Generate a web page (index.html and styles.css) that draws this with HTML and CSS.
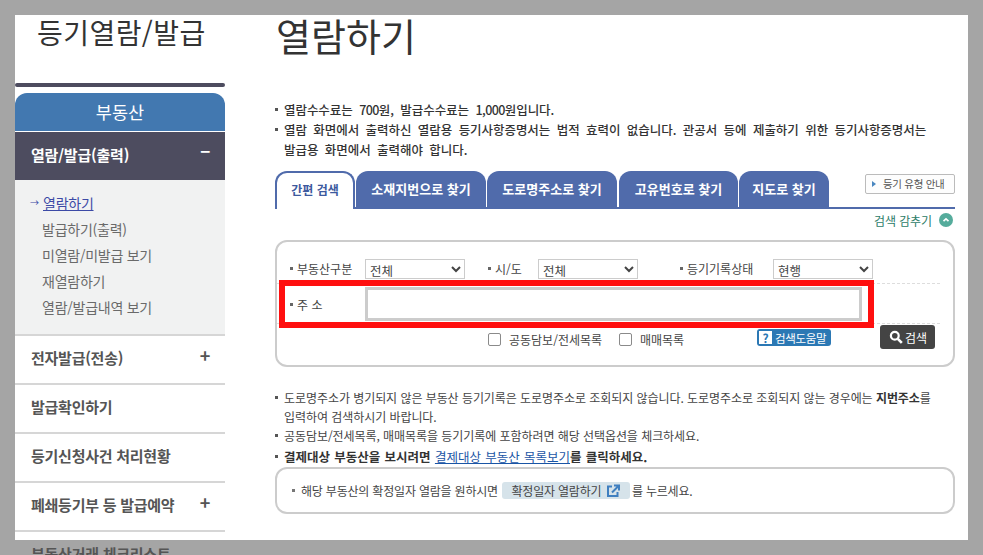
FILE: index.html
```html
<!DOCTYPE html>
<html lang="ko">
<head>
<meta charset="utf-8">
<title>열람하기</title>
<link rel="stylesheet" href="styles.css">
</head>
<body>
<div class="panel">
  <aside class="side">
    <h2 class="side-title">등기열람/발급</h2>
    <div class="side-bar"></div>
    <div class="side-tab">부동산</div>
    <div class="menu-open"><span>열람/발급(출력)</span><span class="sign">−</span></div>
    <ul class="sub">
      <li class="cur"><span class="arrow">→</span><a href="#">열람하기</a></li>
      <li>발급하기(출력)</li>
      <li>미열람/미발급 보기</li>
      <li>재열람하기</li>
      <li>열람/발급내역 보기</li>
    </ul>
    <div class="menu"><span>전자발급(전송)</span><span class="sign">+</span></div>
    <div class="menu"><span>발급확인하기</span></div>
    <div class="menu"><span>등기신청사건 처리현황</span></div>
    <div class="menu"><span>폐쇄등기부 등 발급예약</span><span class="sign">+</span></div>
    <div class="menu"><span>부동산거래 체크리스트</span></div>
  </aside>
  <main class="main">
    <h1 class="title">열람하기</h1>
    <ul class="notes top">
      <li>열람수수료는 <span class="num">700</span>원, 발급수수료는 <span class="num">1,000</span>원입니다.</li>
      <li>열람 화면에서 출력하신 열람용 등기사항증명서는 법적 효력이 없습니다. 관공서 등에 제출하기 위한 등기사항증명서는<br>발급용 화면에서 출력해야 합니다.</li>
    </ul>
    <div class="tabs">
      <div class="tab active">간편 검색</div>
      <div class="tab t130">소재지번으로 찾기</div>
      <div class="tab t130">도로명주소로 찾기</div>
      <div class="tab t119">고유번호로 찾기</div>
      <div class="tab t90">지도로 찾기</div>
      <a class="guide" href="#"><i></i>등기 유형 안내</a>
    </div>
    <div class="hide-row">검색 감추기
      <svg class="up" width="14" height="14" viewBox="0 0 14 14"><circle cx="7" cy="7" r="7" fill="#55ac9c"/><path d="M4.5 8.2 7 5.8l2.5 2.4" fill="none" stroke="#fff" stroke-width="1.6"/></svg>
    </div>
    <form class="search">
      <div class="row-sel">
        <label class="lab l1">부동산구분</label><select class="sel"><option>전체</option></select>
        <label class="lab l2">시/도</label><select class="sel"><option>전체</option></select>
        <label class="lab l3">등기기록상태</label><select class="sel"><option>현행</option></select>
      </div>
      <div class="row-addr">
        <label class="lab l1">주 소</label><input class="addr" type="text">
      </div>
      <div class="row-opt">
        <label class="chk c1"><input type="checkbox">공동담보/전세목록</label>
        <label class="chk c2"><input type="checkbox">매매목록</label>
        <a class="help" href="#"><b>?</b>검색도움말</a>
        <button class="go" type="button">
          <svg width="14" height="14" viewBox="0 0 14 14"><circle cx="5.8" cy="5.8" r="3.9" fill="none" stroke="#fff" stroke-width="2.2"/><path d="m8.8 8.8 4 4" stroke="#fff" stroke-width="2.6"/></svg>검색
        </button>
      </div>
      <div class="red"></div>
    </form>
    <ul class="notes bottom">
      <li>도로명주소가 병기되지 않은 부동산 등기기록은 도로명주소로 조회되지 않습니다. 도로명주소로 조회되지 않는 경우에는 <b>지번주소</b>를<br>입력하여 검색하시기 바랍니다.</li>
      <li>공동담보/전세목록, 매매목록을 등기기록에 포함하려면 해당 선택옵션을 체크하세요.</li>
      <li class="strong">결제대상 부동산을 보시려면 <a href="#">결제대상 부동산 목록보기</a>를 클릭하세요.</li>
    </ul>
    <div class="info">
      <span class="dot">해당 부동산의 확정일자 열람을 원하시면</span>
      <a class="date" href="#">확정일자 열람하기
        <svg width="14" height="14" viewBox="0 0 14 14"><path d="M6 2.5H2v9.5h9.5V8" fill="none" stroke="#3f7fc0" stroke-width="2"/><path d="M6 8.5 12 2.5M8 1.5h5v5" fill="none" stroke="#3f7fc0" stroke-width="2"/></svg>
      </a>
      <span>를 누르세요.</span>
    </div>
  </main>
</div>
</body>
</html>
```
FILE: styles.css
```css
* { box-sizing: border-box; }
html, body { margin: 0; padding: 0; height: 555px; overflow: hidden; }
body { background: #a5a5a5; font-family: "Noto Sans CJK KR", "Noto Sans", sans-serif; color: #444; font-size: 13px; }
ul { list-style: none; margin: 0; padding: 0; }
a { color: inherit; }
.panel { margin: 15px 15px 0; width: 953px; height: 525px; background: #fff; display: flex; }

.side { width: 210px; flex: none; }
.side-title { margin: 0; height: 68px; padding: 0 0 0 22px; font-size: 28px; font-weight: 400; line-height: 34px; color: #333; letter-spacing: 0.45px; }
.side-bar { height: 4px; background: #4d4c5f; border-radius: 2px; }
.side-tab { margin-top: 6px; height: 38px; background: #4278b0; color: #fff; border-radius: 12px 12px 0 0; text-align: center; font-size: 17.5px; line-height: 38px; }
.menu-open { margin-top: 1px; height: 48px; background: #4d4c5f; color: #fff; font-size: 15px; font-weight: 700; padding: 0 15px 0 16px; display: flex; justify-content: space-between; line-height: 46px; letter-spacing: -.2px; }
.menu-open .sign { font-size: 17px; line-height: 38px; }
.sub { height: 154px; background: #f1f2f2; padding: 10px 0 0 27px; font-size: 14px; line-height: 26px; color: #6a6a6a; letter-spacing: -.25px; }
.sub li { height: 26px; }
.sub li.cur { margin-left: -12px; color: #3c4aa6; }
.sub .arrow { display: inline-block; width: 13px; font-size: 9px; vertical-align: top; }
.menu { height: 49px; border-top: 2px solid #d6d6d6; padding: 0 15px 0 16px; font-size: 15px; font-weight: 700; color: #555; display: flex; justify-content: space-between; line-height: 44px; letter-spacing: -.25px; }
.menu .sign { font-size: 18px; line-height: 38px; }

.main { flex: none; width: 680px; margin-left: 50px; }
.title { margin: 0; height: 85px; padding-left: 1px; font-size: 38px; font-weight: 400; line-height: 39px; color: #333; }
.notes li { position: relative; padding-left: 9px; line-height: 20px; }
.notes li::before { content: ""; position: absolute; left: 0; top: 8px; width: 3px; height: 3px; background: #555; }
.notes.top { height: 71px; font-weight: 500; font-size: 12.5px; letter-spacing: -.05px; word-spacing: 3px; color: #333; }
.num { letter-spacing: -.6px; }

.tabs { display: flex; gap: 1px; height: 38px; border-bottom: 2px solid #506bab; position: relative; }
.tab { width: 130px; height: 36px; background: #506bab; color: #fff; font-weight: 700; font-size: 13px; border-radius: 12px 12px 0 0; text-align: center; line-height: 36px; }
.tab.t119 { width: 119px; margin-left: 1px; }
.tab.t90 { width: 90px; }
.tab.active { width: 80px; height: 38px; background: #fff; color: #3d5a9e; border: 2px solid #506bab; border-bottom: 0; line-height: 34px; font-size: 12px; }
.guide { position: absolute; right: 0; top: 3px; width: 90px; height: 20px; border: 1px solid #bbb; border-radius: 2px; font-size: 10.5px; color: #555; line-height: 18px; text-decoration: none; padding-left: 17px; letter-spacing: -.3px; background: #fdfdfd; }
.guide i { position: absolute; left: 6px; top: 6px; border-left: 4px solid #4a87c0; border-top: 3px solid transparent; border-bottom: 3px solid transparent; }
.hide-row { height: 31px; padding: 0 2px 9px 0; display: flex; justify-content: flex-end; align-items: center; gap: 7px; font-size: 12px; letter-spacing: -.1px; color: #2c7c68; }

.search { position: relative; height: 127px; border: 2px solid #ccc; border-radius: 12px; }
.row-sel { height: 41px; padding-top: 17px; display: flex; align-items: flex-start; }
.lab { font-size: 12px; color: #444; position: relative; line-height: 20px; padding-left: 7px; }
.lab::before { content: ""; position: absolute; left: 0; top: 8px; width: 3px; height: 3px; background: #666; }
.lab.l1 { margin-left: 13px; width: 75px; }
.lab.l2 { margin-left: 23px; width: 50px; }
.lab.l3 { margin-left: 42px; width: 93px; }
.sel { width: 100px; height: 20px; border: 1px solid #ccc; background: #fff; font: 12.5px "Noto Sans CJK KR", sans-serif; color: #444; padding: 0; border-radius: 0; }
.row-addr { height: 41px; margin-right: 13px; display: flex; align-items: center; border-top: 1px dashed #ddd; border-bottom: 1px dashed #ddd; }
.row-addr .lab { top: 1px; }
.addr { width: 497px; height: 34px; border: 3px solid #ccc; background: #fff; }
.row-opt { display: flex; align-items: flex-start; position: relative; font-size: 12px; padding-top: 5px; }
.chk { display: flex; align-items: center; height: 16px; margin-top: 2px; }
.chk input { appearance: none; margin: 0 8px 0 0; width: 13px; height: 13px; border: 1.5px solid #8a8a8a; border-radius: 2px; background: #fff; }
.c1 { margin-left: 211px; width: 131px; }
.c2 { width: 138px; }
.help { width: 74px; height: 17px; background: #2b78b4; border-radius: 3px; color: #fff; text-decoration: none; display: flex; align-items: center; gap: 3px; font-size: 11.5px; padding-left: 2px; letter-spacing: -.3px; }
.help b { width: 13px; height: 13px; background: #fff; color: #2b78b4; text-align: center; line-height: 13px; font-size: 12px; }
.go { margin-left: 49px; margin-top: -4px; width: 55px; height: 24px; background: #444; color: #fff; border: 0; border-radius: 3px; font: 12px "Noto Sans CJK KR", sans-serif; display: flex; align-items: center; gap: 2px; padding: 0 0 0 9px; }
.red { position: absolute; left: 2px; top: 38px; width: 595px; height: 48px; border: 6px solid #ff0f0f; }

.notes.bottom { margin-top: 20px; height: 80px; font-size: 12px; letter-spacing: -.06px; }
.notes.bottom b { color: #333; }
.notes.bottom li:first-child { top: 1px; line-height: 19px; }
.notes.bottom li:nth-child(2) { top: 1px; }
.notes.bottom li.strong { margin-top: 2px; font-weight: 700; font-size: 12.5px; letter-spacing: 0; word-spacing: .8px; color: #333; }
.notes.bottom li.strong a { font-weight: 400; color: #1a55a5; }
.info { height: 47px; border: 2px solid #ccc; border-radius: 12px; padding: 0 0 0 15px; display: flex; align-items: center; font-size: 12px; letter-spacing: -.2px; }
.dot { position: relative; padding-left: 9px; margin-right: 4px; }
.dot::before { content: ""; position: absolute; left: 0; top: 7px; width: 3px; height: 3px; background: #777; }
.date { width: 128px; height: 17px; background: #d6e3ea; border-radius: 3px; text-decoration: none; display: flex; align-items: center; justify-content: center; gap: 5px; margin-right: 2px; }
```
